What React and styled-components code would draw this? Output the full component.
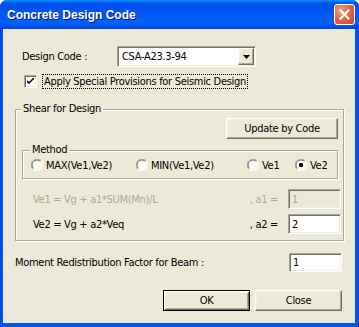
import React from 'react';
import styled, { createGlobalStyle, css } from 'styled-components';

const FACE = '#ECE9D8';
const SHADOW = '#ACA899';
const DARK = '#716F64';
const LIGHT = '#F1EFE2';

const GlobalStyle = createGlobalStyle`
  html, body { margin: 0; padding: 0; background: #fff; }
  body {
    font-family: "DejaVu Sans Condensed", "Liberation Sans", sans-serif;
    font-size: 11px;
    letter-spacing: -0.3px;
    color: #000;
  }
`;

const sunken = css`
  border: 1px solid;
  border-color: ${SHADOW} #fff #fff ${SHADOW};
  box-shadow: inset 1px 1px 0 ${DARK}, inset -1px -1px 0 ${LIGHT};
`;

const raised = css`
  border: 1px solid;
  border-color: #fff ${DARK} ${DARK} #fff;
  box-shadow: inset -1px -1px 0 ${SHADOW}, inset 1px 1px 0 ${LIGHT};
`;

const Window = styled.div`
  width: 359px;
  height: 327px;
  display: flex;
  flex-direction: column;
  box-sizing: border-box;
  background: linear-gradient(90deg, #0831D9 0, #0055EA 1px, #0055EA calc(100% - 1px), #0831D9 100%);
  border-radius: 7px 7px 0 0;
  overflow: hidden;
`;

const TitleBar = styled.div`
  height: 29px;
  flex: none;
  display: flex;
  align-items: center;
  padding: 0 4px 0 7px;
  background: linear-gradient(180deg, #0997FF 0, #0053EE 3px, #0050EE 6px, #0058F5 14px, #0061FF 22px, #0053EE 26px, #0046D8 29px);
`;

const Title = styled.span`
  flex: 1;
  color: #fff;
  font-family: "Liberation Sans", "DejaVu Sans", sans-serif;
  font-weight: bold;
  font-size: 12px;
  letter-spacing: 0;
  text-shadow: 1px 1px 0 #0A1883;
  margin-top: 1px;
`;

const CloseBox = styled.div`
  width: 21px;
  height: 21px;
  box-sizing: border-box;
  border: 1px solid #fff;
  border-radius: 3px;
  background: radial-gradient(circle at 30% 30%, #F2A08A 0, #E26A4A 45%, #C8432A 100%);
  display: flex;
  align-items: center;
  justify-content: center;
`;

const Client = styled.div`
  flex: 1;
  margin: 0 4px 4px 3px;
  background: ${FACE};
  display: flex;
  flex-direction: column;
  padding: 0 11px 0 12px;
`;

const CodeRow = styled.div`
  display: flex;
  align-items: center;
  margin: 17px 0 0 7px;
  height: 21px;
`;

const Label = styled.span`
  width: ${p => p.$w || 'auto'};
  flex: none;
  white-space: nowrap;
  color: ${p => (p.$off ? SHADOW : '#000')};
`;

const Combo = styled.div`
  width: 139px;
  height: 21px;
  box-sizing: border-box;
  ${sunken};
  background: #fff;
  display: flex;
  align-items: center;
  padding: 1px;
`;

const ComboText = styled.span`
  flex: 1;
  padding-left: 3px;
`;

const DropBtn = styled.div`
  width: 16px;
  height: 17px;
  box-sizing: border-box;
  ${raised};
  background: ${FACE};
  display: flex;
  align-items: center;
  justify-content: center;
`;

const CheckRow = styled.div`
  display: flex;
  align-items: center;
  margin: 6px 0 0 9px;
  height: 16px;
`;

const CheckBox = styled.div`
  width: 13px;
  height: 13px;
  box-sizing: border-box;
  ${sunken};
  background: #fff;
  display: flex;
  align-items: center;
  justify-content: center;
`;

const FocusLabel = styled.span`
  margin-left: 5px;
  padding: 1px 2px;
  outline: 1px dotted #000;
  outline-offset: -1px;
  white-space: nowrap;
`;

const Group = styled.fieldset`
  margin: ${p => p.$mt || 0}px 0 0;
  padding: 0 ${p => p.$pr || 5}px ${p => p.$pb || 6}px ${p => p.$pl || 6}px;
  min-width: 0;
  border: 1px solid ${SHADOW};
  box-shadow: inset 1px 1px 0 #fff, 1px 1px 0 #fff;
  display: flex;
  flex-direction: column;
`;

const Caption = styled.legend`
  padding: 0 2px;
  margin-left: -1px;
  line-height: 14px;
  font-size: 11px;
  background: ${FACE};
`;

const ButtonRow = styled.div`
  display: flex;
  justify-content: flex-end;
  gap: 5px;
  margin-top: ${p => p.$mt}px;
  padding-right: ${p => p.$pr || 0}px;
`;

const Button = styled.div`
  width: ${p => p.$w}px;
  height: 21px;
  box-sizing: border-box;
  display: flex;
  align-items: center;
  justify-content: center;
  background: ${FACE};
  ${p => p.$default
    ? css`
        border: 1px solid #000;
        box-shadow: inset 1px 1px 0 #fff, inset -1px -1px 0 ${DARK}, inset 2px 2px 0 ${LIGHT}, inset -2px -2px 0 ${SHADOW};
      `
    : raised};
`;

const RadioRow = styled.div`
  display: flex;
  align-items: center;
  height: 14px;
  margin-top: 1px;
`;

const RadioItem = styled.label`
  display: flex;
  align-items: center;
  gap: 3px;
  width: ${p => p.$w || 'auto'};
  flex: none;
  white-space: nowrap;
`;

const FormulaRow = styled.div`
  display: flex;
  align-items: center;
  margin: ${p => p.$mt}px -3px 0 0;
  padding-left: 11px;
`;

const Formula = styled.span`
  flex: 1;
  white-space: nowrap;
  color: ${p => (p.$off ? SHADOW : '#000')};
`;

const Coef = styled.span`
  margin-right: 10px;
  white-space: nowrap;
  color: ${p => (p.$off ? SHADOW : '#000')};
`;

const Field = styled.div`
  width: ${p => p.$w || 53}px;
  height: ${p => p.$h || 20}px;
  box-sizing: border-box;
  ${p => (p.$off
    ? css`
        border: 1px solid;
        border-color: ${SHADOW} #fff #fff ${SHADOW};
        box-shadow: inset 1px 1px 0 ${DARK}, inset -1px -1px 0 ${LIGHT};
        background: ${FACE};
        color: ${SHADOW};
      `
    : css`
        ${sunken};
        background: #fff;
      `)};
  padding: 2px 3px;
  display: flex;
  align-items: center;
`;

const MomentRow = styled.div`
  display: flex;
  align-items: center;
  justify-content: space-between;
  margin: 12px 2px 0 0;
`;

const Radio = ({ on }) => (
  <svg width="12" height="12" viewBox="0 0 12 12">
    <circle cx="6" cy="6" r="5.5" fill="#fff" />
    <path d="M1.8 10.2 A5.5 5.5 0 0 1 10.2 1.8" stroke={SHADOW} fill="none" />
    <path d="M10.2 1.8 A5.5 5.5 0 0 1 1.8 10.2" stroke="#fff" fill="none" />
    <path d="M2.5 9.5 A4.5 4.5 0 0 1 9.5 2.5" stroke={DARK} fill="none" />
    <path d="M9.5 2.5 A4.5 4.5 0 0 1 2.5 9.5" stroke={LIGHT} fill="none" />
    {on && <rect x="4" y="4" width="4" height="4" rx="1.2" fill="#000" />}
  </svg>
);

const App = () => (
  <>
    <GlobalStyle />
    <Window>
      <TitleBar>
        <Title>Concrete Design Code</Title>
        <CloseBox>
          <svg width="11" height="11" viewBox="0 0 11 11">
            <path d="M1.5 1.5 L9.5 9.5 M9.5 1.5 L1.5 9.5" stroke="#fff" strokeWidth="2.2" strokeLinecap="square" />
          </svg>
        </CloseBox>
      </TitleBar>
      <Client>
        <CodeRow>
          <Label $w="95px">Design Code :</Label>
          <Combo>
            <ComboText>CSA-A23.3-94</ComboText>
            <DropBtn>
              <svg width="7" height="4" viewBox="0 0 7 4">
                <path d="M0 0 H7 L3.5 4 Z" fill="#000" />
              </svg>
            </DropBtn>
          </Combo>
        </CodeRow>
        <CheckRow>
          <CheckBox>
            <svg width="7" height="7" viewBox="0 0 7 7">
              <path d="M0 2 L0 4 L2 6 L7 1 L7 -1 L2 4 Z" fill="#000" />
            </svg>
          </CheckBox>
          <FocusLabel>Apply Special Provisions for Seismic Design</FocusLabel>
        </CheckRow>
        <Group $mt={13}>
          <Caption>Shear for Design</Caption>
          <ButtonRow $mt={2}>
            <Button $w={112}>Update by Code</Button>
          </ButtonRow>
          <Group $mt={4} $pl={8} $pb={6}>
            <Caption>Method</Caption>
            <RadioRow>
              <RadioItem $w="105px"><Radio />MAX(Ve1,Ve2)</RadioItem>
              <RadioItem $w="111px"><Radio />MIN(Ve1,Ve2)</RadioItem>
              <RadioItem $w="48px"><Radio />Ve1</RadioItem>
              <RadioItem><Radio on />Ve2</RadioItem>
            </RadioRow>
          </Group>
          <FormulaRow $mt={10}>
            <Formula $off>Ve1 = Vg + a1*SUM(Mn)/L</Formula>
            <Coef $off>, a1 =</Coef>
            <Field $off>1</Field>
          </FormulaRow>
          <FormulaRow $mt={5}>
            <Formula>Ve2 = Vg + a2*Veq</Formula>
            <Coef>, a2 =</Coef>
            <Field>2</Field>
          </FormulaRow>
        </Group>
        <MomentRow>
          <Label>Moment Redistribution Factor for Beam :</Label>
          <Field $w={53} $h={19}>1</Field>
        </MomentRow>
        <ButtonRow $mt={18} $pr={2}>
          <Button $w={87} $default>OK</Button>
          <Button $w={87}>Close</Button>
        </ButtonRow>
      </Client>
    </Window>
  </>
);

export default App;
